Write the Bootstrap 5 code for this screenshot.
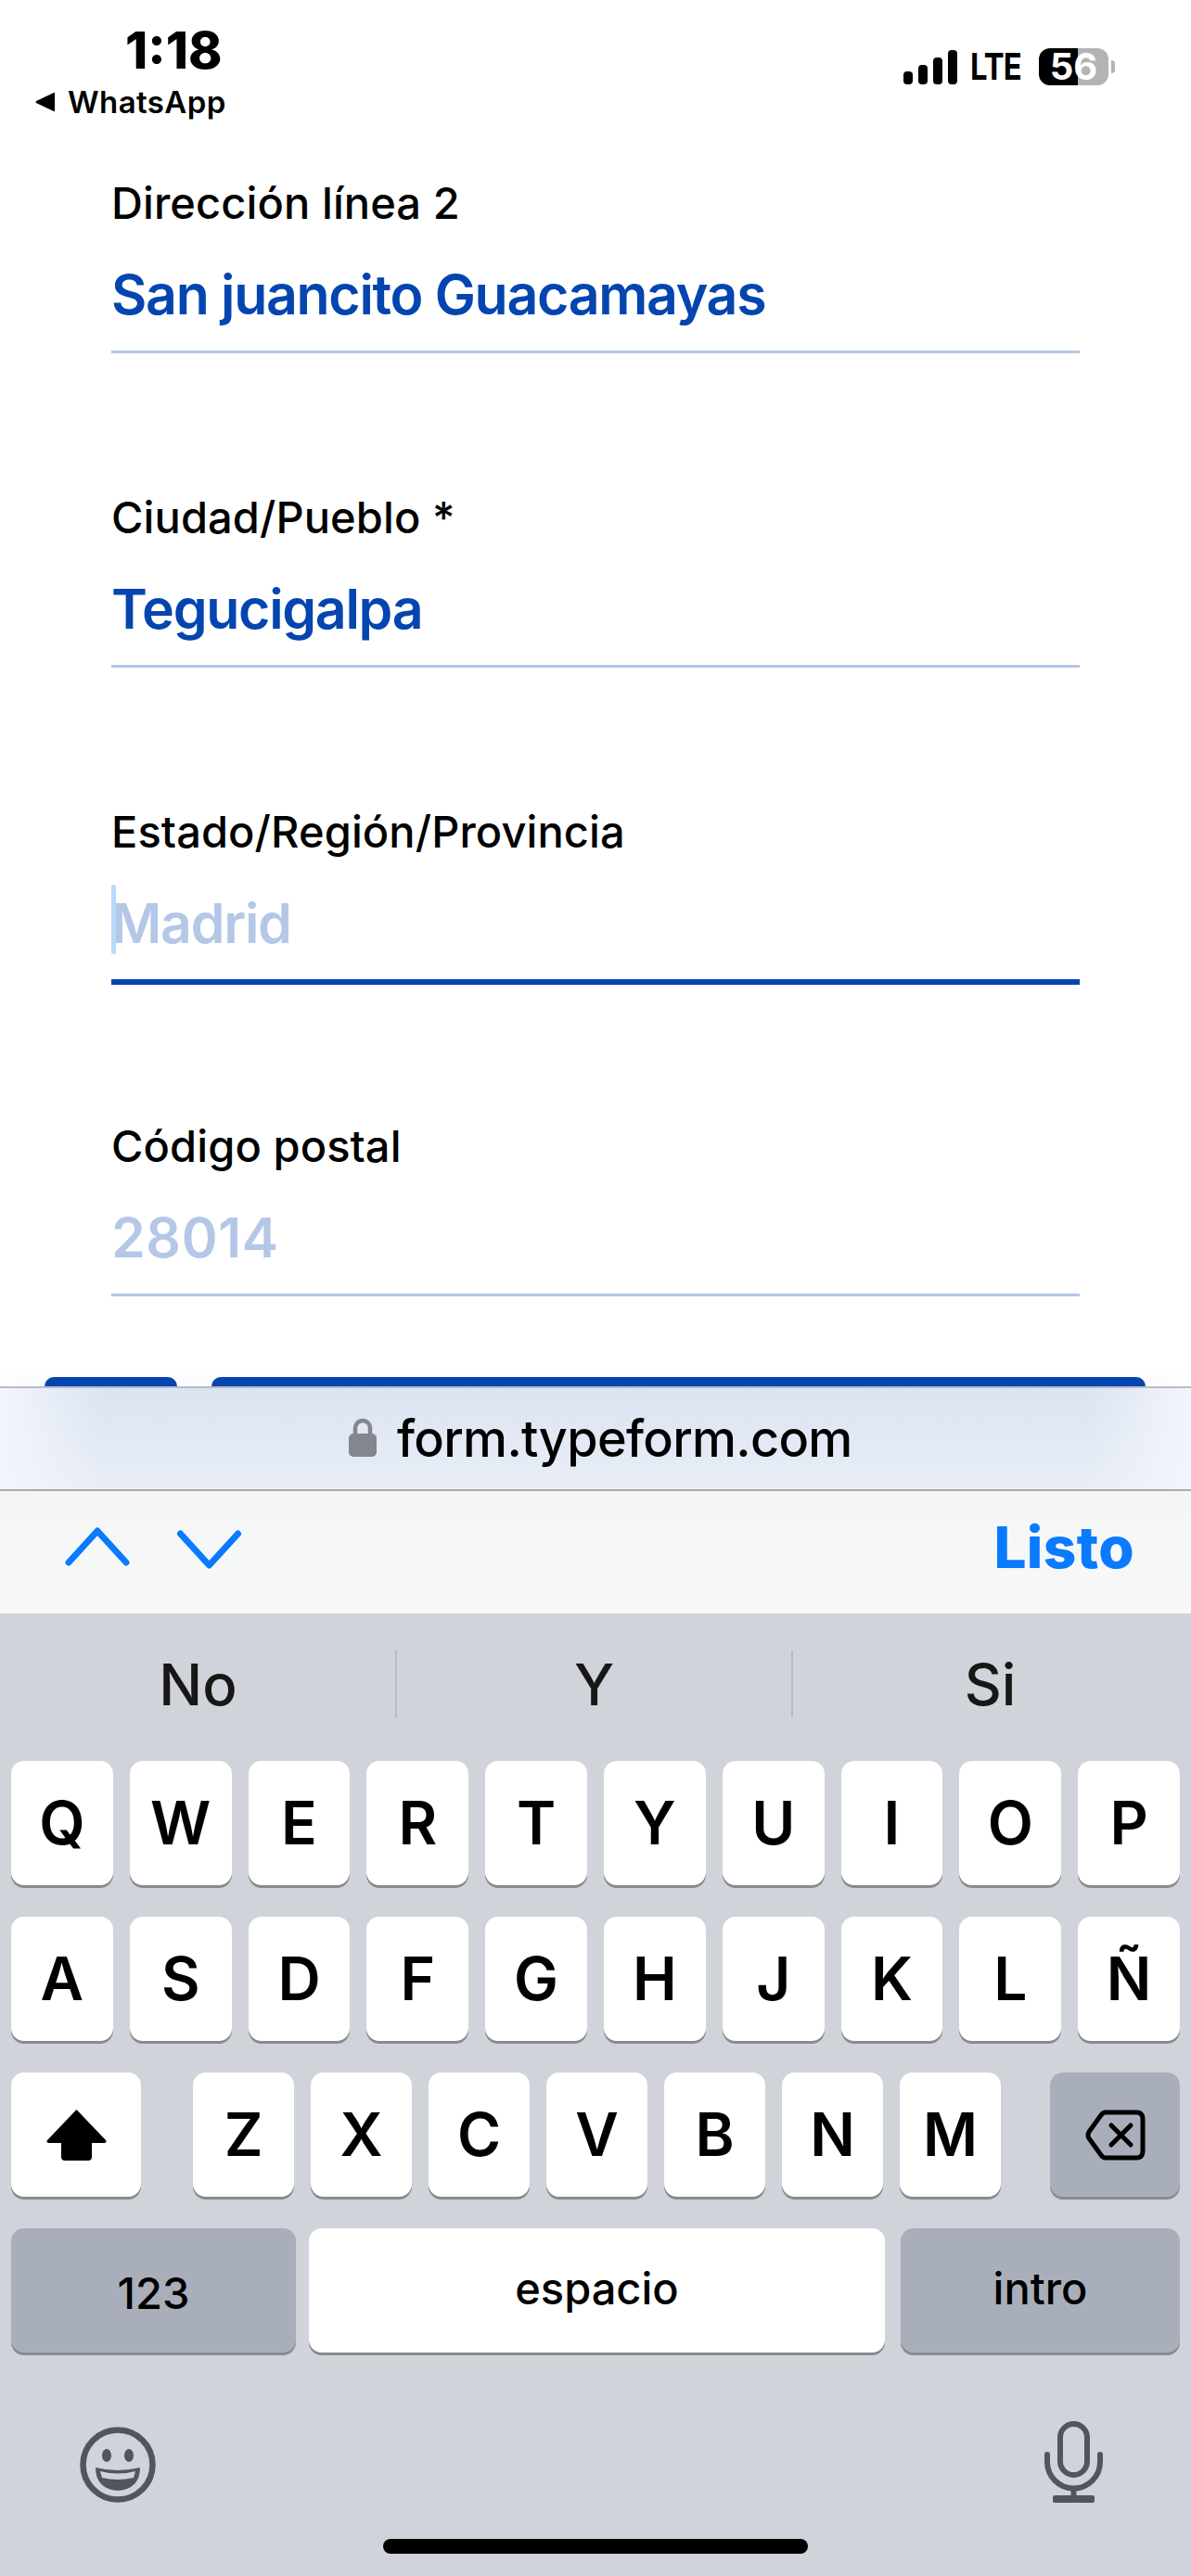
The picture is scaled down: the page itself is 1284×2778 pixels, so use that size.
<!DOCTYPE html>
<html lang="es">
<head>
<meta charset="utf-8">
<title>Typeform</title>
<link href="https://cdn.jsdelivr.net/npm/bootstrap@5.3.0/dist/css/bootstrap.min.css" rel="stylesheet">
<style>
html,body{margin:0;background:#fff}
body{width:1284px;height:2778px;overflow:hidden;font-family:Inter,"Liberation Sans",sans-serif;color:#000}
.status-area{height:189px;padding-right:82px}
.clock{font-size:55px;line-height:60px;font-weight:800;margin:24px 0 6px 135px}
.back-app{font-size:33px;line-height:40px;font-weight:600;margin-left:38px;gap:13px;letter-spacing:.4px}
.status-icons{margin-top:52px;height:40px;gap:14px}
.lte{font-size:40px;line-height:40px;font-weight:700;letter-spacing:-1px;width:60px;white-space:nowrap;transform:scaleX(.82);transform-origin:left center}
.battery{width:75px;height:40px;border-radius:12px;background:linear-gradient(90deg,#000 56%,#b3b3b3 56%);color:#fff;font-size:40px;font-weight:700;line-height:40px}
.battery-cap{width:4px;height:14px;background:#b3b3b3;border-radius:0 4px 4px 0;margin-left:-11px}
.field{height:339px;margin:0 120px;box-sizing:border-box}
.field-tail{height:279px}
.field-label{font-size:47px;line-height:60px;font-weight:500;letter-spacing:.1px}
.field-value{position:relative;font-size:59px;line-height:76px;font-weight:600;margin-top:31px;color:#0445af;letter-spacing:-1.3px;padding-bottom:22px;border-bottom:3px solid #b3c7e7}
.field-value.is-empty{color:#b4c7e7}
.field-value.is-digits{letter-spacing:.6px}
.field-value.is-focus{border-bottom:6px solid #0445af}
.caret-bar{position:absolute;left:0;top:-4px;width:5px;height:75px;border-radius:3px;background:#b9d9fb}
.strip{height:10px;padding-left:48px;gap:37px}
.strip-short{width:143px;background:#0445af;border-radius:14px 14px 0 0}
.strip-long{width:1007px;background:#0445af;border-radius:14px 14px 0 0}
.urlbar{height:113px;background:linear-gradient(90deg,#f2f5fb 0,rgba(242,245,251,0) 110px,rgba(242,245,251,0) 1174px,#f2f5fb 100%),linear-gradient(180deg,#dbe4f2,#e9eef6);border-top:2px solid #b8bcc9;border-bottom:2px solid #a9aab0;gap:22px;font-size:54px;line-height:1;padding-left:376px;box-shadow:0 -10px 24px rgba(0,0,0,.02)}
.lock-pad{margin-top:-3px}
.url-text{letter-spacing:-.7px;font-weight:500}
.accessory{height:132px;background:linear-gradient(180deg,#f4f6f6,#f8f8f8);padding:0 61px 12px 70px;gap:50px}
.chev-down{margin-top:6px}
.listo{font-size:62px;font-weight:800;color:#0a7aff;letter-spacing:.4px}
.keyboard{background:#d0d3da;height:1038px}
.suggest{height:159px;font-size:62px;font-weight:500;color:#171717}
.suggest-item{width:427px;position:relative;padding-bottom:6px}
.suggest-line{position:absolute;left:-1px;top:40px;width:2px;height:72px;background:#b9bbc1}
.keys{padding:0 12px;gap:32px}
.key-row{height:136px;gap:18px}
.ios-key{background:#fff;border-radius:14px;box-shadow:0 3px 0 #898a8d;height:134px;font-size:64px;font-weight:600;color:#000;line-height:1}
.key-dark{background:#a9afba}
.key-w{flex:1 1 0}
.key-letter{width:109px}
.key-side{width:140px}
.word{font-size:47px;font-weight:500}
.w-num{width:307px;padding-top:4px}
.w-space{width:621px;padding-bottom:6px}
.w-intro{width:301px;padding-bottom:6px}
.row4{gap:14px}
.row4 .w-intro{margin-left:3px}
.letters{gap:18px;margin:0 53px 0 56px}
.bottom-row{height:88px;margin-top:72px;padding:0 95px 0 86px}
.home-bar{width:458px;height:16px;border-radius:8px;background:#000;margin:39px auto 0}
</style>
</head>
<body>
<header class="status-area d-flex justify-content-between">
  <div>
    <div class="clock">1:18</div>
    <div class="back-app d-flex align-items-center">
      <svg width="22" height="22" viewBox="0 0 22 22"><path d="M21 1.5v19q0 1-1 .5L1 12q-1-1 0-2L20 1q1-.5 1 .5z" fill="#000"/></svg>
      <span>WhatsApp</span>
    </div>
  </div>
  <div class="status-icons d-flex align-items-center">
    <svg width="58" height="37" viewBox="0 0 58 37"><g fill="#000"><rect x="0" y="23" width="10" height="14" rx="4"/><rect x="16" y="16" width="10" height="21" rx="4"/><rect x="32" y="8" width="10" height="29" rx="4"/><rect x="48" y="0" width="10" height="37" rx="4"/></g></svg>
    <span class="lte">LTE</span>
    <span class="battery d-flex align-items-center justify-content-center">56</span>
    <span class="battery-cap"></span>
  </div>
</header>

<main>
  <div class="field">
    <div class="field-label">Dirección línea 2</div>
    <div class="field-value">San juancito Guacamayas</div>
  </div>
  <div class="field">
    <div class="field-label">Ciudad/Pueblo *</div>
    <div class="field-value">Tegucigalpa</div>
  </div>
  <div class="field">
    <div class="field-label">Estado/Región/Provincia</div>
    <div class="field-value is-empty is-focus"><span class="caret-bar"></span>Madrid</div>
  </div>
  <div class="field field-tail">
    <div class="field-label">Código postal</div>
    <div class="field-value is-empty is-digits">28014</div>
  </div>
  <div class="strip d-flex">
    <div class="strip-short"></div>
    <div class="strip-long"></div>
  </div>
</main>

<div class="urlbar d-flex align-items-center">
  <svg class="lock-pad" width="30" height="42" viewBox="0 0 30 42"><path d="M7 20V11a8 8 0 0 1 16 0v9" fill="none" stroke="#83868f" stroke-width="4.5"/><rect x="0" y="17" width="30" height="25" rx="5" fill="#83868f"/></svg>
  <span class="url-text">form.typeform.com</span>
</div>

<div class="accessory d-flex align-items-center">
  <svg width="70" height="42" viewBox="0 0 70 42"><path d="M4 38 35 4l31 34" fill="none" stroke="#0a7aff" stroke-width="7" stroke-linecap="round" stroke-linejoin="round"/></svg>
  <svg class="chev-down" width="71" height="42" viewBox="0 0 70 42"><path d="M4 4l31 34L66 4" fill="none" stroke="#0a7aff" stroke-width="7" stroke-linecap="round" stroke-linejoin="round"/></svg>
  <span class="listo ms-auto">Listo</span>
</div>

<section class="keyboard">
  <div class="suggest d-flex align-items-stretch text-center">
    <div class="suggest-item d-flex align-items-center justify-content-center">No</div>
    <div class="suggest-item d-flex align-items-center justify-content-center"><span class="suggest-line"></span>Y</div>
    <div class="suggest-item d-flex align-items-center justify-content-center"><span class="suggest-line"></span>Si</div>
  </div>
  <div class="keys d-flex flex-column">
    <div class="key-row d-flex">
      <div class="ios-key key-w d-flex align-items-center justify-content-center">Q</div>
      <div class="ios-key key-w d-flex align-items-center justify-content-center">W</div>
      <div class="ios-key key-w d-flex align-items-center justify-content-center">E</div>
      <div class="ios-key key-w d-flex align-items-center justify-content-center">R</div>
      <div class="ios-key key-w d-flex align-items-center justify-content-center">T</div>
      <div class="ios-key key-w d-flex align-items-center justify-content-center">Y</div>
      <div class="ios-key key-w d-flex align-items-center justify-content-center">U</div>
      <div class="ios-key key-w d-flex align-items-center justify-content-center">I</div>
      <div class="ios-key key-w d-flex align-items-center justify-content-center">O</div>
      <div class="ios-key key-w d-flex align-items-center justify-content-center">P</div>
    </div>
    <div class="key-row d-flex">
      <div class="ios-key key-w d-flex align-items-center justify-content-center">A</div>
      <div class="ios-key key-w d-flex align-items-center justify-content-center">S</div>
      <div class="ios-key key-w d-flex align-items-center justify-content-center">D</div>
      <div class="ios-key key-w d-flex align-items-center justify-content-center">F</div>
      <div class="ios-key key-w d-flex align-items-center justify-content-center">G</div>
      <div class="ios-key key-w d-flex align-items-center justify-content-center">H</div>
      <div class="ios-key key-w d-flex align-items-center justify-content-center">J</div>
      <div class="ios-key key-w d-flex align-items-center justify-content-center">K</div>
      <div class="ios-key key-w d-flex align-items-center justify-content-center">L</div>
      <div class="ios-key key-w d-flex align-items-center justify-content-center">Ñ</div>
    </div>
    <div class="key-row d-flex gap-0">
      <div class="ios-key key-side d-flex align-items-center justify-content-center">
        <svg width="65" height="56" viewBox="0 0 65 56"><path d="M32.500 1 64 34q1.500 2-1 3H49v15q0 4-4 4H20q-4 0-4-4V37H2q-2.500-1-1-3z" fill="#000"/></svg>
      </div>
      <div class="letters d-flex">
        <div class="ios-key key-letter d-flex align-items-center justify-content-center">Z</div>
        <div class="ios-key key-letter d-flex align-items-center justify-content-center">X</div>
        <div class="ios-key key-letter d-flex align-items-center justify-content-center">C</div>
        <div class="ios-key key-letter d-flex align-items-center justify-content-center">V</div>
        <div class="ios-key key-letter d-flex align-items-center justify-content-center">B</div>
        <div class="ios-key key-letter d-flex align-items-center justify-content-center">N</div>
        <div class="ios-key key-letter d-flex align-items-center justify-content-center">M</div>
      </div>
      <div class="ios-key key-dark key-side d-flex align-items-center justify-content-center">
        <svg width="65" height="55" viewBox="0 0 65 55"><path d="M22 3h33q7 0 7 7v35q0 7-7 7H22q-3 0-5-3L4 31q-2-3.500 0-7L17 6q2-3 5-3z" fill="none" stroke="#000" stroke-width="5" stroke-linejoin="round"/><path d="M28 17l21 21M49 17 28 38" stroke="#000" stroke-width="5" stroke-linecap="round"/></svg>
      </div>
    </div>
    <div class="key-row row4 d-flex">
      <div class="ios-key key-dark word w-num d-flex align-items-center justify-content-center">123</div>
      <div class="ios-key word w-space d-flex align-items-center justify-content-center">espacio</div>
      <div class="ios-key key-dark word w-intro d-flex align-items-center justify-content-center">intro</div>
    </div>
  </div>
  <div class="bottom-row d-flex justify-content-between align-items-end">
    <svg width="82" height="82" viewBox="0 0 82 82"><circle cx="41" cy="41" r="37.500" fill="none" stroke="#50555f" stroke-width="6.500"/><ellipse cx="29" cy="31" rx="5" ry="7" fill="#50555f"/><ellipse cx="53" cy="31" rx="5" ry="7" fill="#50555f"/><path d="M17 44q24 6 48 0 0 23-24 25-24-2-24-25z" fill="#50555f"/><path d="M22 48q19 5 38 0l-2 7q-17 4-34 0z" fill="#d0d3da"/></svg>
    <svg width="63" height="88" viewBox="0 0 63 88"><rect x="17" y="3" width="29" height="55" rx="14.500" fill="none" stroke="#50555f" stroke-width="6"/><path d="M3 36v8a28.500 28.500 0 0 0 57 0v-8" fill="none" stroke="#50555f" stroke-width="6" stroke-linecap="round"/><path d="M31.500 72v10" stroke="#50555f" stroke-width="6"/><rect x="9" y="80" width="45" height="8" rx="2" fill="#50555f"/></svg>
  </div>
  <div class="home-bar"></div>
</section>
<script src="https://cdn.jsdelivr.net/npm/bootstrap@5.3.0/dist/js/bootstrap.bundle.min.js"></script>
</body>
</html>
